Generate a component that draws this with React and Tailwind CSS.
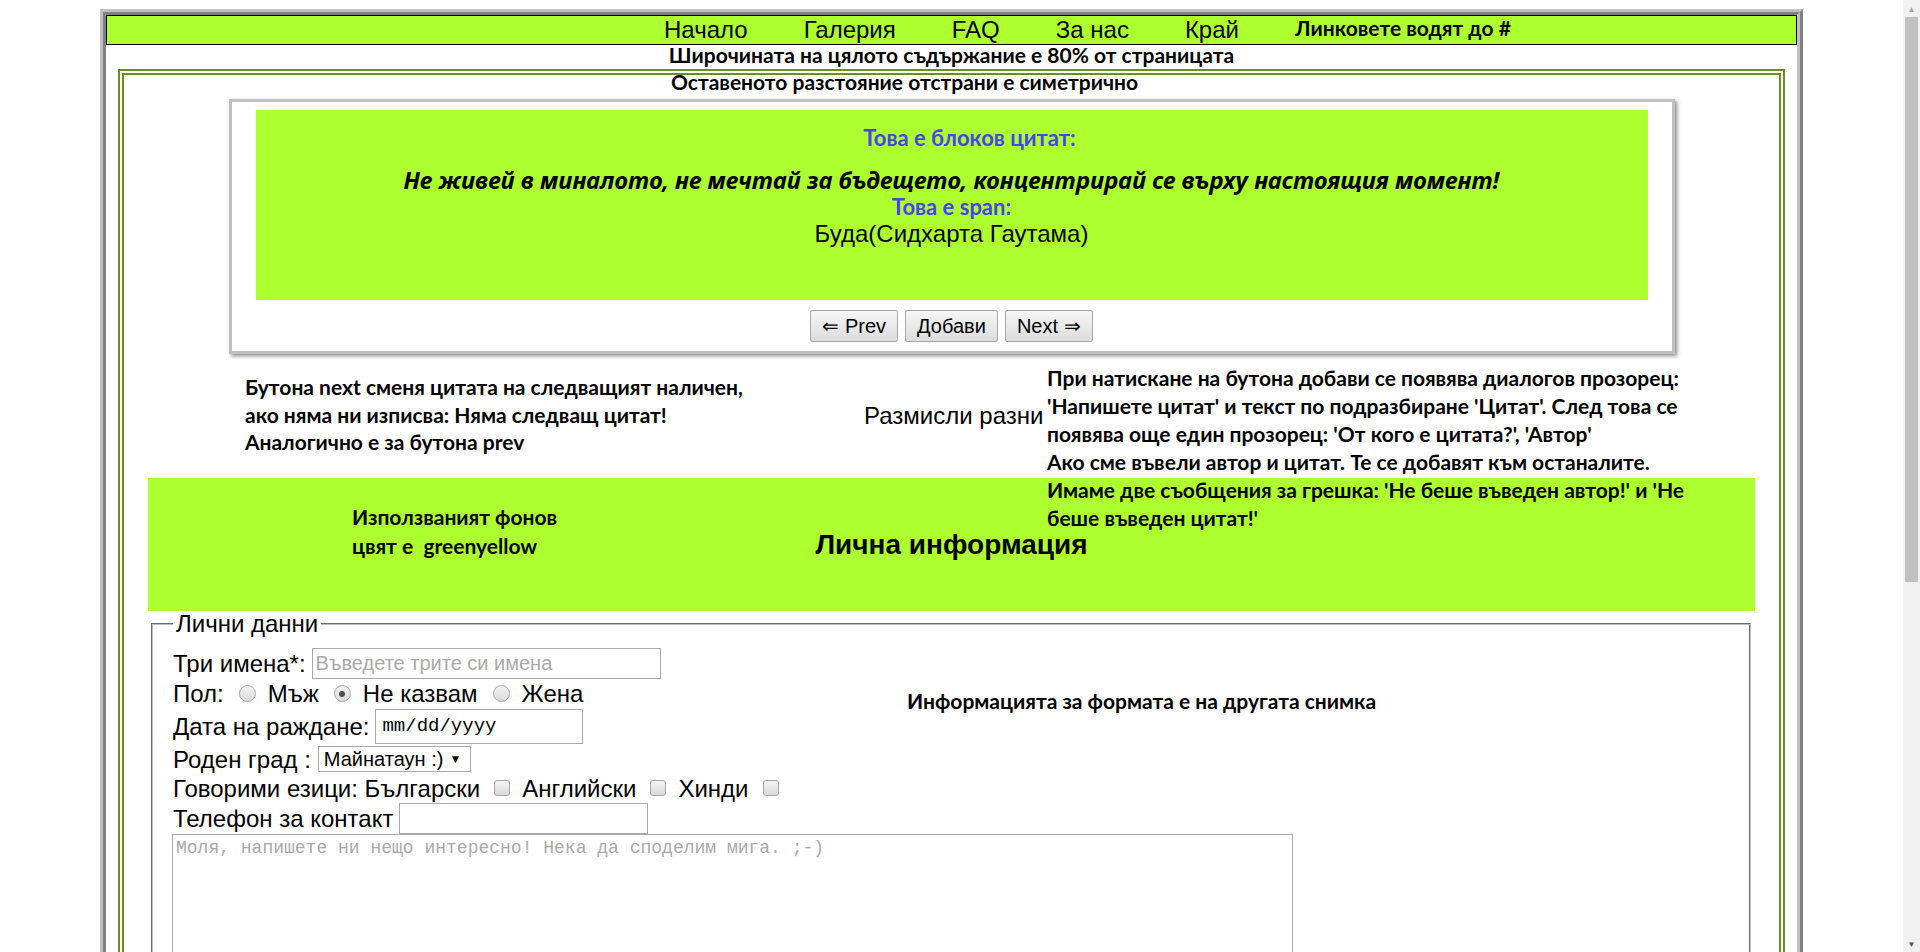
import React from "react";

// Arial-like and Calibri-like stacks
const arial = "font-['Liberation_Sans',Arial,sans-serif]";
const cal = "font-['Lato','Open_Sans',sans-serif] font-bold";

const links = ["Начало", "Галерия", "FAQ", "За нас", "Край"];

function Radio({ checked }) {
  return (
    <span className="flex h-[17px] w-[17px] shrink-0 items-center justify-center rounded-full border border-[#a6a6a6] bg-linear-to-b from-[#f4f4f4] to-[#d9d9d9]">
      {checked && <span className="h-[6px] w-[6px] rounded-full bg-[#505050]" />}
    </span>
  );
}

function Check() {
  return (
    <span className="block h-[16px] w-[16px] shrink-0 rounded-[3px] border border-[#a6a6a6] bg-linear-to-b from-[#f4f4f4] to-[#d9d9d9]" />
  );
}

function Btn({ children }) {
  return (
    <button
      className={`${arial} h-[32px] rounded-[2px] border border-[#a6a6a6] bg-linear-to-b from-[#f6f6f6] to-[#dcdcdc] px-[11px] text-[20px] leading-none text-black`}
    >
      {children}
    </button>
  );
}

function Scrollbar() {
  return (
    <div className="flex w-[17px] shrink-0 flex-col bg-[#f1f1f1]">
      <div className="flex h-[17px] items-center justify-center text-[8px] leading-none text-[#a3a3a3]">▲</div>
      <div className="mx-[2px] h-[565px] bg-[#c1c1c1]" />
      <div className="flex-1" />
      <div className="flex h-[17px] items-center justify-center text-[8px] leading-none text-[#505050]">▼</div>
    </div>
  );
}

export default function App() {
  return (
    <div className="flex h-[952px] overflow-hidden bg-white text-black">
      <div className="min-w-0 flex-1">
        {/* ridge frame */}
        <div className="mx-[100px] mt-[9px] border-[3px] border-t-[#c0c0c0] border-l-[#c0c0c0] border-r-[#808080] border-b-[#808080]">
          <div className="border-[3px] border-t-[#808080] border-l-[#808080] border-r-[#c0c0c0] border-b-[#c0c0c0]">
            <nav className="grid h-[30px] grid-cols-[1fr_auto_1fr] items-center border border-black bg-[#adff2f]">
              <div />
              <ul className={`flex ${arial} text-[24px] leading-[28px]`}>
                {links.map((l) => (
                  <li key={l} className="px-[28px]">
                    <a href="#">{l}</a>
                  </li>
                ))}
              </ul>
              <div className={`${cal} pb-[4px] pl-[28px] text-[21px] leading-[24px] whitespace-nowrap`}>
                Линковете водят до #
              </div>
            </nav>

            <p className={`${cal} h-[24px] text-center text-[21px] leading-[20px]`}>
              Широчината на цялото съдържание е 80% от страницата
            </p>

            <div className="mx-[12px] border-[6px] border-double border-[#6b8e23]">
              <p className={`${cal} h-[24px] pl-[547px] text-[21px] leading-[14px]`}>
                Оставеното разстояние отстрани е симетрично
              </p>

              {/* quote box */}
              <div className="mx-auto w-[1446px] border-[3px] border-[#c0c0c0] px-[24px] pt-[8px] pb-[9px] shadow-[2px_2px_4px_#8a8a8a]">
                <div className="flex h-[190px] flex-col items-center bg-[#adff2f] pt-[18px]">
                  <h3 className={`${cal} pl-[36px] text-[22px] leading-[20px] text-[#4646e6]`}>
                    Това е блоков цитат:
                  </h3>
                  <blockquote className="mt-[18px] font-['Noto_Sans',sans-serif] text-[23.7px] leading-[28px] font-bold italic">
                    Не живей в миналото, не мечтай за бъдещето, концентрирай се върху настоящия момент!
                  </blockquote>
                  <span className={`${cal} mt-[3px] text-[22px] leading-[20px] text-[#4646e6]`}>
                    Това е span:
                  </span>
                  <span className={`${arial} mt-[4px] text-[24px] leading-[26px]`}>
                    Буда(Сидхарта Гаутама)
                  </span>
                </div>
                <div className="mt-[10px] flex justify-center gap-[7px]">
                  <Btn>⇐ Prev</Btn>
                  <Btn>Добави</Btn>
                  <Btn>Next ⇒</Btn>
                </div>
              </div>

              {/* notes */}
              <div className="relative z-10 flex h-[124px]">
                <div className={`${cal} ml-[121px] w-[619px] shrink-0 pt-[19px] text-[21px] leading-[27.5px] whitespace-nowrap`}>
                  Бутона next сменя цитата на следващият наличен,
                  <br />
                  ако няма ни изписва: Няма следващ цитат!
                  <br />
                  Аналогично е за бутона prev
                </div>
                <div className={`${arial} w-[183px] shrink-0 pt-[50px] text-[24px] leading-[23px] whitespace-nowrap`}>
                  Размисли разни
                </div>
                <div className={`${cal} pt-[10px] text-[21px] leading-[28px] whitespace-nowrap`}>
                  При натискане на бутона добави се появява диалогов прозорец:
                  <br />
                  'Напишете цитат' и текст по подразбиране 'Цитат'. След това се
                  <br />
                  появява още един прозорец: 'От кого е цитата?', 'Автор'
                  <br />
                  Ако сме въвели автор и цитат. Те се добавят към останалите.
                  <br />
                  Имаме две съобщения за грешка: 'Не беше въведен автор!' и 'Не
                  <br />
                  беше въведен цитат!'
                </div>
              </div>

              {/* banner */}
              <div className="mx-[24px] grid h-[133px] grid-cols-[1fr_auto_1fr] items-center bg-[#adff2f]">
                <div className={`${cal} self-start pt-[24px] pl-[204px] text-[21px] leading-[29px] whitespace-nowrap`}>
                  Използваният фонов
                  <br />
                  цвят е&nbsp; greenyellow
                </div>
                <h2 className={`${arial} text-[28px] leading-[30px] font-bold`}>Лична информация</h2>
                <div />
              </div>

              {/* form */}
              <fieldset
                className={`${arial} mt-[1px] ml-[27px] mr-[28px] border-2 border-[#c0c0c0] [border-style:groove] pt-[12px] pl-[20px] pb-[40px] text-[24px] leading-[23px]`}
              >
                <legend className="px-[3px] leading-[23px]">Лични данни</legend>
                <div className="flex">
                  <div className="w-[734px] shrink-0">
                    <div className="flex h-[32px] items-center">
                      <span>Три имена*:</span>
                      <input
                        placeholder="Въведете трите си имена"
                        className={`${arial} ml-[6px] h-[31px] w-[349px] border border-[#a9a9a9] px-[3px] text-[20px] placeholder:text-[#a9a9a9]`}
                      />
                    </div>
                    <div className="flex h-[29px] items-center">
                      <span>Пол:</span>
                      <span className="ml-[15px]"><Radio /></span>
                      <span className="ml-[12px]">Мъж</span>
                      <span className="ml-[15px]"><Radio checked /></span>
                      <span className="ml-[12px]">Не казвам</span>
                      <span className="ml-[15px]"><Radio /></span>
                      <span className="ml-[12px]">Жена</span>
                    </div>
                    <div className="flex h-[36px] items-center">
                      <span>Дата на раждане:</span>
                      <span className="ml-[6px] flex h-[35px] w-[208px] items-center border border-[#a9a9a9] px-[6px] font-['Liberation_Mono',monospace] text-[19px]">
                        mm/dd/yyyy
                      </span>
                    </div>
                    <div className="flex h-[30px] items-center">
                      <span>Роден град :</span>
                      <span className="ml-[7px] flex h-[26px] w-[153px] items-center border border-[#a9a9a9] px-[5px] text-[20px]">
                        Майнатаун :)
                        <span className="ml-[6px] text-[12px]">▼</span>
                      </span>
                    </div>
                    <div className="flex h-[28px] items-center">
                      <span>Говорими езици: Български</span>
                      <span className="ml-[14px]"><Check /></span>
                      <span className="ml-[12px]">Английски</span>
                      <span className="ml-[14px]"><Check /></span>
                      <span className="ml-[12px]">Хинди</span>
                      <span className="ml-[14px]"><Check /></span>
                    </div>
                    <div className="flex h-[32px] items-center">
                      <span>Телефон за контакт</span>
                      <input className="ml-[6px] h-[31px] w-[249px] border border-[#a9a9a9] px-[3px] text-[20px]" />
                    </div>
                  </div>
                  <div className={`${cal} pt-[42px] text-[21px] leading-[24px] whitespace-nowrap`}>
                    Информацията за формата е на другата снимка
                  </div>
                </div>
                <textarea
                  placeholder="Моля, напишете ни нещо интересно! Нека да споделим мига. ;-)"
                  className="-ml-[1px] block h-[200px] w-[1121px] resize-none border border-[#a9a9a9] px-[3px] py-[3px] font-['Liberation_Mono',monospace] text-[18px] leading-[21px] placeholder:text-[#a9a9a9]"
                />
              </fieldset>
            </div>
          </div>
        </div>
      </div>
      <Scrollbar />
    </div>
  );
}
